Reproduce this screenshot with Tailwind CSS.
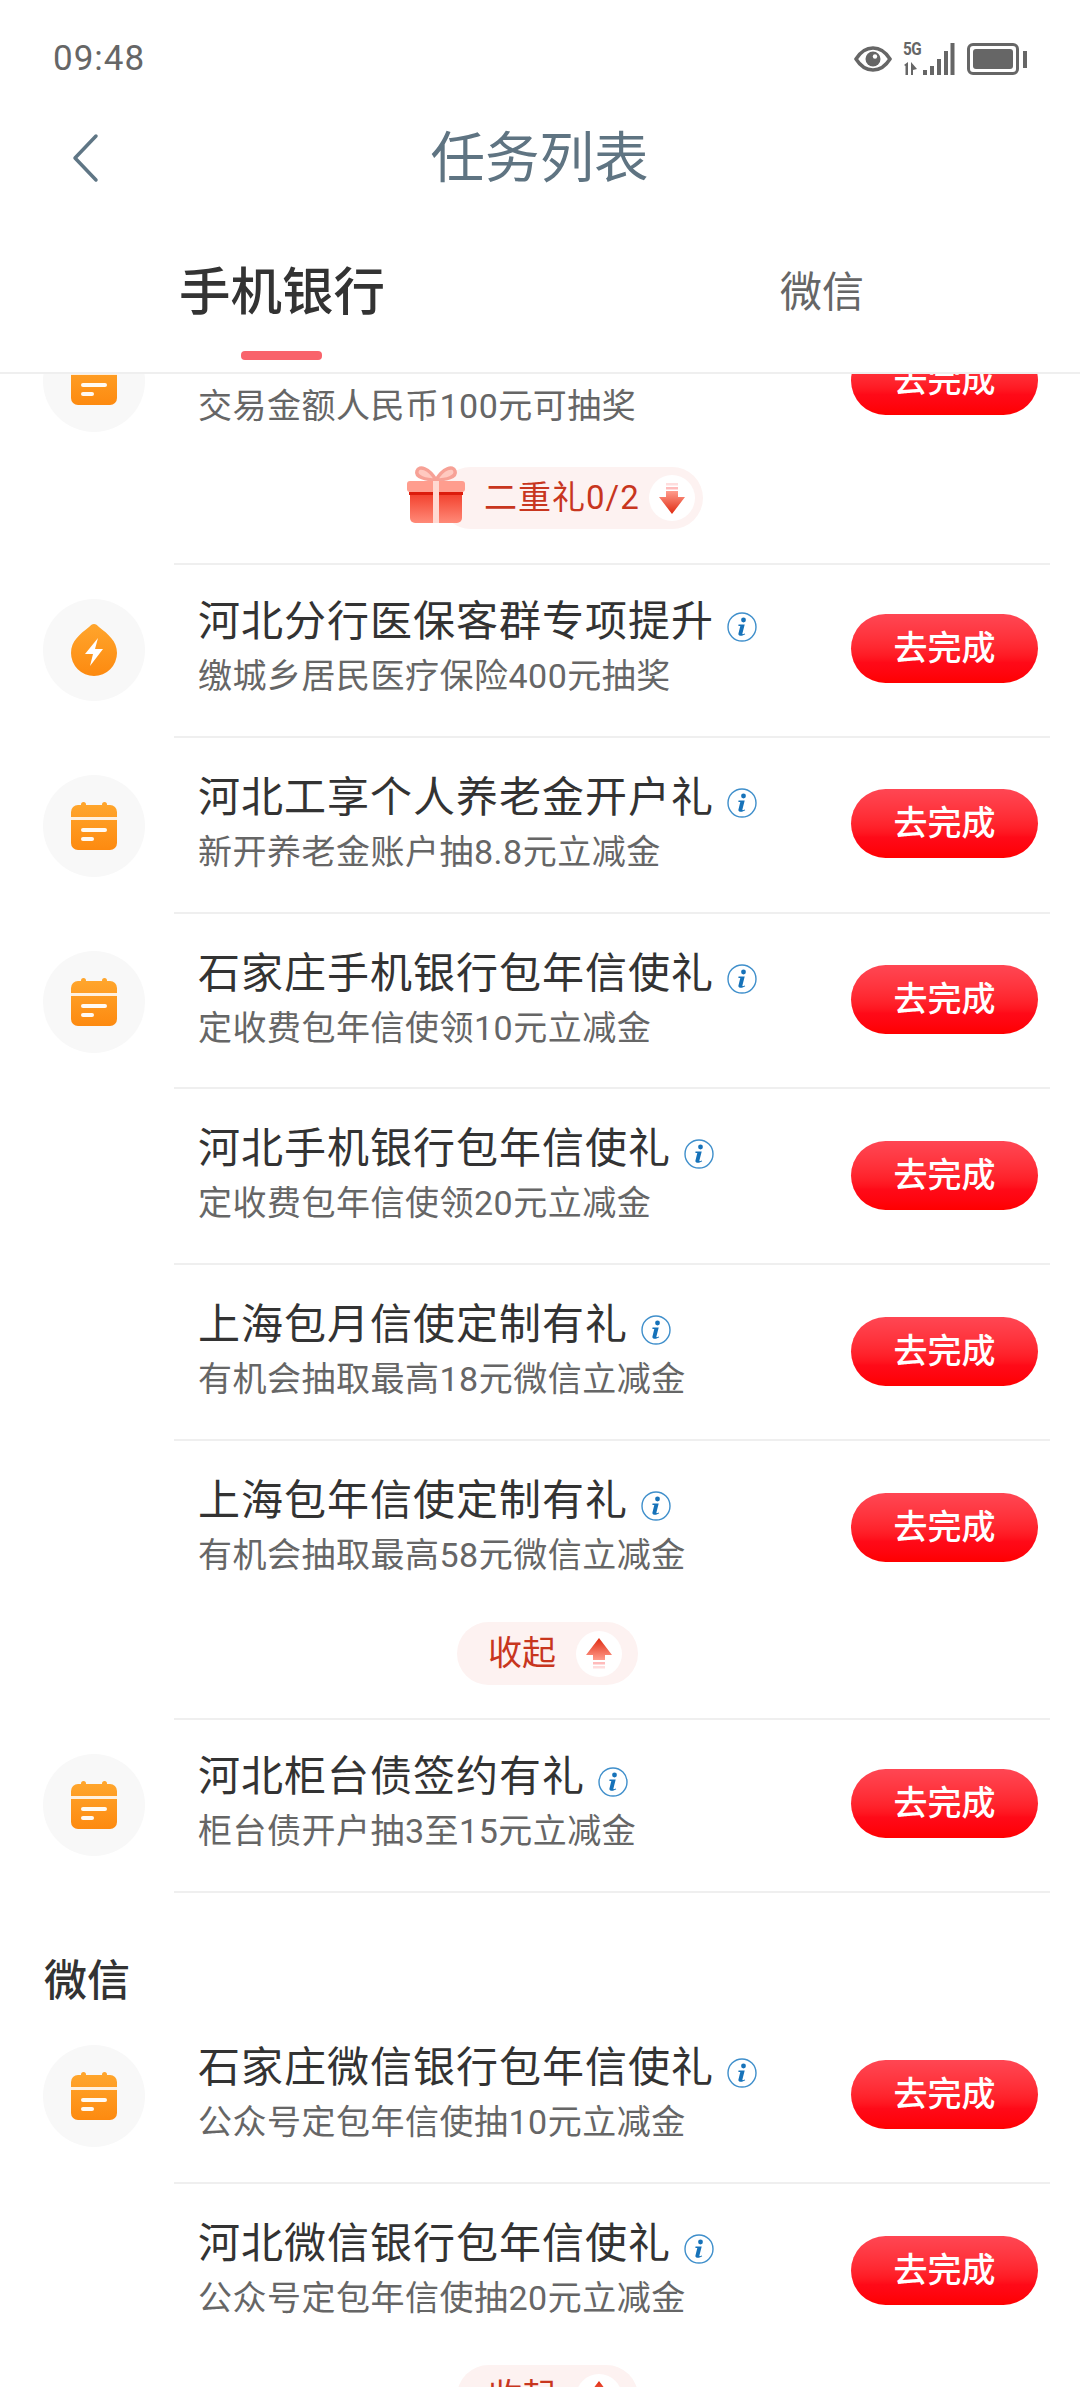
<!DOCTYPE html>
<html lang="zh-CN">
<head>
  <meta charset="UTF-8">
  <meta name="viewport" content="width=device-width, initial-scale=1.0">
  <title>任务列表</title>
  <script src="https://cdn.jsdelivr.net/npm/@tailwindcss/browser@4"></script>
</head>
<body class="bg-white">
<div class="w-[1080px] h-[2388px] overflow-hidden bg-white font-['Roboto','Noto_Sans_CJK_SC',sans-serif]">

  <svg width="0" height="0" class="absolute">
    <defs>
      <linearGradient id="orange" x1="0" y1="0" x2="0" y2="1">
        <stop offset="0" stop-color="#ffa52c"/><stop offset="1" stop-color="#fd8a10"/>
      </linearGradient>
      <linearGradient id="giftBody" x1="0" y1="0" x2="0" y2="1">
        <stop offset="0" stop-color="#f0301c"/><stop offset="1" stop-color="#ff8a78"/>
      </linearGradient>
      <linearGradient id="arrowDown" x1="0" y1="0" x2="0" y2="1">
        <stop offset="0" stop-color="#ff9c8c"/><stop offset="1" stop-color="#e02a10"/>
      </linearGradient>
      <linearGradient id="arrowUp" x1="0" y1="0" x2="0" y2="1">
        <stop offset="0" stop-color="#e02a10"/><stop offset="1" stop-color="#ff9c8c"/>
      </linearGradient>
      <symbol id="calendar" viewBox="0 0 46 48">
        <rect x="10" y="0" width="5" height="7" rx="2.500" fill="#ffa52c"/>
        <rect x="31" y="0" width="5" height="7" rx="2.500" fill="#ffa52c"/>
        <rect x="0" y="3" width="46" height="45" rx="7" fill="url(#orange)"/>
        <rect x="0" y="15" width="46" height="3" fill="#fff" opacity=".85"/>
        <rect x="10" y="26" width="26" height="4" rx="2" fill="#fff" opacity=".95"/>
        <rect x="10" y="35" width="13" height="4" rx="2" fill="#fff" opacity=".95"/>
      </symbol>
      <symbol id="drop" viewBox="0 0 46 52">
        <path fill="url(#orange)" d="M23 0c2 0 3 1 5 3 9 7 18 14 18 26a23 23 0 0 1-46 0C0 17 9 10 18 3c2-2 3-3 5-3z"/>
        <path fill="#fff" d="M27 14 14 30h8l-3 12 13-17h-8z"/>
      </symbol>
      <symbol id="info" viewBox="0 0 30 30">
        <circle cx="15" cy="15" r="14" fill="none" stroke="#3f8fcb" stroke-width="1.400"/>
        <circle cx="16.500" cy="8" r="2.400" fill="#1672b9"/>
        <path fill="#1672b9" d="M11.500 12.500h6.200l-2.300 9c-.2.9.7 1 2.400 0l.4.8c-2.200 1.700-7 2.500-6.800-.6l1.900-7.700h-1.900z"/>
      </symbol>
    </defs>
  </svg>

  <!-- Header -->
  <header class="h-[374px] border-b-2 border-[#efefef] relative z-10 bg-white">
    <div class="h-[116px] flex justify-between items-center pl-[53px] pr-[53px] pt-[2px]">
      <span class="text-[35px] text-[#666] tracking-[1px]">09:48</span>
      <div class="flex items-center">
        <svg width="38" height="26" viewBox="0 0 38 26" fill="none">
          <path d="M2 13C7 5 13 2 19 2s12 3 17 11c-5 8-11 11-17 11S7 21 2 13z" stroke="#666" stroke-width="3.500"/>
          <circle cx="19" cy="13" r="7.500" fill="#666"/>
          <circle cx="21" cy="10.500" r="2.200" fill="#fff"/>
        </svg>
        <div class="ml-[11px] w-[52px] h-[34px] relative">
          <span class="absolute left-0 top-[-2px] text-[18px] leading-[18px] font-bold text-[#666] tracking-[-0.5px] scale-x-85 origin-left">5G</span>
          <svg class="absolute left-0 top-0" width="52" height="34" viewBox="0 0 52 34" fill="#666">
            <path d="M1 23l4-3v13H2.500v-9zM8 20l6 7-4 1v5H8zM20 28h4v5h-4zM27 24h4v9h-4zM34 17h4v16h-4zM41 9h4v24h-4zM47.500 1h4v32h-4z"/>
          </svg>
        </div>
        <div class="ml-[12px] w-[52px] h-[32px] rounded-[6px] border-[3px] border-[#666] p-[3px]">
          <div class="w-full h-full rounded-[3px] bg-[#666]"></div>
        </div>
        <div class="ml-[4px] w-[4px] h-[17px] bg-[#666]"></div>
      </div>
    </div>
    <div class="h-[78px] mt-[3px] flex items-center justify-center relative">
      <svg class="absolute left-[70px] top-[14px]" width="30" height="50" viewBox="0 0 30 50" fill="none">
        <path d="M26 3 5 25l21 22" stroke="#5f7685" stroke-width="3.500" stroke-linecap="round" stroke-linejoin="round"/>
      </svg>
      <span class="text-[54.5px] text-[#5f7482] leading-none -ml-[1px]">任务列表</span>
    </div>
    <div class="flex pl-[179px] pt-[64px] items-center">
      <span class="text-[51.5px] leading-[64px] font-medium text-[#333] w-[601px]">手机银行</span>
      <span class="text-[42px] leading-[64px] text-[#666]">微信</span>
    </div>
    <div class="absolute left-[241px] top-[351px] w-[81px] h-[9px] rounded-[4px] bg-[#f9636b]"></div>
  </header>

  <!-- List -->
  <main id="list" class="h-[2014px] overflow-hidden -mt-[1px]"></main>
</div>

<script>
const btn = `<div class="w-[187px] h-[69px] rounded-full bg-gradient-to-b from-[#ff4653] via-[#ff0a18] via-70% to-[#ff0000] text-white text-[34px] font-medium flex items-center justify-center">去完成</div>`;

// tight: the row right after a pill sits 3px closer to its top line
function row(item) {
  const icon = item.icon
    ? `<div class="w-[102px] h-[102px] rounded-full bg-[#f8f8f8] flex items-center justify-center"><svg width="46" height="${item.icon == 'drop' ? 52 : 48}"><use href="#${item.icon}"/></svg></div>`
    : "";
  return `
  <div class="flex ${item.tight ? "h-[172.84px]" : "h-[175.84px]"}">
    <div class="w-[174px] pl-[43px] pt-[39px] shrink-0 ${item.tight ? "-mt-[3px]" : ""}">${icon}</div>
    <div class="w-[876px] ${item.noline ? "border-t-2 border-transparent" : "border-t-2 border-[#efefef]"} pl-[24px] pr-[12px]">
      <div class="flex items-start ${item.tight ? "-mt-[3px]" : ""}">
        <div class="flex-1 pt-[34px]">
          <div class="flex items-center h-[52px]">
            <span class="text-[42px] tracking-[1px] text-[#333] leading-[52px]">${item.title}</span>
            <svg class="ml-[13px] mt-[10px]" width="30" height="30"><use href="#info"/></svg>
          </div>
          <div class="text-[34px] tracking-[.5px] text-[#666] leading-[44px] mt-[6px]">${item.sub}</div>
        </div>
        <div class="mt-[51.5px]">${btn}</div>
      </div>
    </div>
  </div>`;
}

const collapse = `
  <div class="h-[103.5px] pt-[7.5px] pl-[457px]">
    <div class="w-[181px] h-[63px] rounded-full bg-[#fdf2f1] flex items-center pl-[31px]">
      <span class="text-[34px] text-[#c8361e]">收起</span>
      <div class="ml-[20px] w-[46px] h-[46px] rounded-full bg-white flex items-center justify-center">
        <svg width="26" height="31" viewBox="0 0 26 31">
          <path fill="url(#arrowUp)" d="M13 0 26 17h-7v5H7v-5H0z"/>
          <rect x="7" y="24" width="12" height="2.500" fill="#fbb"/><rect x="7" y="28" width="12" height="2.500" fill="#fdd"/>
        </svg>
      </div>
    </div>
  </div>`;

const double = `
  <div class="h-[150px] pt-[54px] pl-[440px]">
    <div class="relative w-[263px] h-[62px] rounded-full bg-[#fdf2f1] flex items-center pl-[44px]">
      <svg class="absolute left-[-33px] top-[-2px]" width="58" height="60" viewBox="0 0 58 60">
        <path d="M29 15C22 3 12 0 10 6s9 9 19 9c10 0 21-3 19-9S36 3 29 15z" fill="#ffc9c0" stroke="#f7a196" stroke-width="3.500"/>
        <rect x="3" y="22" width="52" height="36" rx="5" fill="url(#giftBody)"/>
        <rect x="0" y="16" width="58" height="11" rx="3" fill="#ff9d8e"/>
        <rect x="2" y="27" width="54" height="3" fill="#dc1c0c"/>
        <rect x="26" y="16" width="6" height="42" fill="#ffd9d2"/>
      </svg>
      <span class="text-[33px] text-[#c8361e] tracking-[1px]">二重礼0/2</span>
      <div class="absolute right-[8px] top-[8px] w-[46px] h-[46px] rounded-full bg-white flex items-center justify-center">
        <svg width="26" height="31" viewBox="0 0 26 31">
          <rect x="7" y="0" width="12" height="2.500" fill="#fdd"/><rect x="7" y="4" width="12" height="2.500" fill="#fbb"/>
          <path fill="url(#arrowDown)" d="M7 8h12v6h7L13 31 0 14h7z"/>
        </svg>
      </div>
    </div>
  </div>`;

const data = [
  { icon: "drop", title: "河北分行医保客群专项提升", sub: "缴城乡居民医疗保险400元抽奖", tight: true },
  { icon: "calendar", title: "河北工享个人养老金开户礼", sub: "新开养老金账户抽8.8元立减金" },
  { icon: "calendar", title: "石家庄手机银行包年信使礼", sub: "定收费包年信使领10元立减金" },
  { title: "河北手机银行包年信使礼", sub: "定收费包年信使领20元立减金" },
  { title: "上海包月信使定制有礼", sub: "有机会抽取最高18元微信立减金" },
  { title: "上海包年信使定制有礼", sub: "有机会抽取最高58元微信立减金" }
];

// first row is scrolled under the header
const firstRow = `
  <div class="h-[40px] flex relative">
    <div class="w-[174px] pl-[43px] shrink-0 h-[59px] overflow-hidden">
      <div class="w-[102px] h-[102px] -mt-[43px] rounded-full bg-[#f8f8f8] flex items-center justify-center"><svg width="46" height="48"><use href="#calendar"/></svg></div>
    </div>
    <div class="w-[876px] pl-[24px] pr-[12px] flex">
      <div class="flex-1 text-[34px] tracking-[.5px] text-[#666] leading-[44px] pt-[11px]">交易金额人民币100元可抽奖</div>
      <div class="h-[42px] overflow-hidden relative"><div class="-mt-[27px]">${btn}</div></div>
    </div>
  </div>`;

let html = firstRow + double;
data.forEach(d => html += row(d));
html += collapse;
html += row({ icon: "calendar", title: "河北柜台债签约有礼", sub: "柜台债开户抽3至15元立减金", tight: true });
html += `<div class="ml-[174px] w-[876px] border-t-2 border-[#efefef]"></div>`;
html += `<div class="h-[113px] pl-[44px] pt-[60px] text-[43px] leading-[56px] text-[#333] font-medium">微信</div>`;
html += row({ icon: "calendar", title: "石家庄微信银行包年信使礼", sub: "公众号定包年信使抽10元立减金", noline: true });
html += row({ title: "河北微信银行包年信使礼", sub: "公众号定包年信使抽20元立减金" });
html += collapse;
document.getElementById("list").innerHTML = html;
</script>
</body>
</html>
